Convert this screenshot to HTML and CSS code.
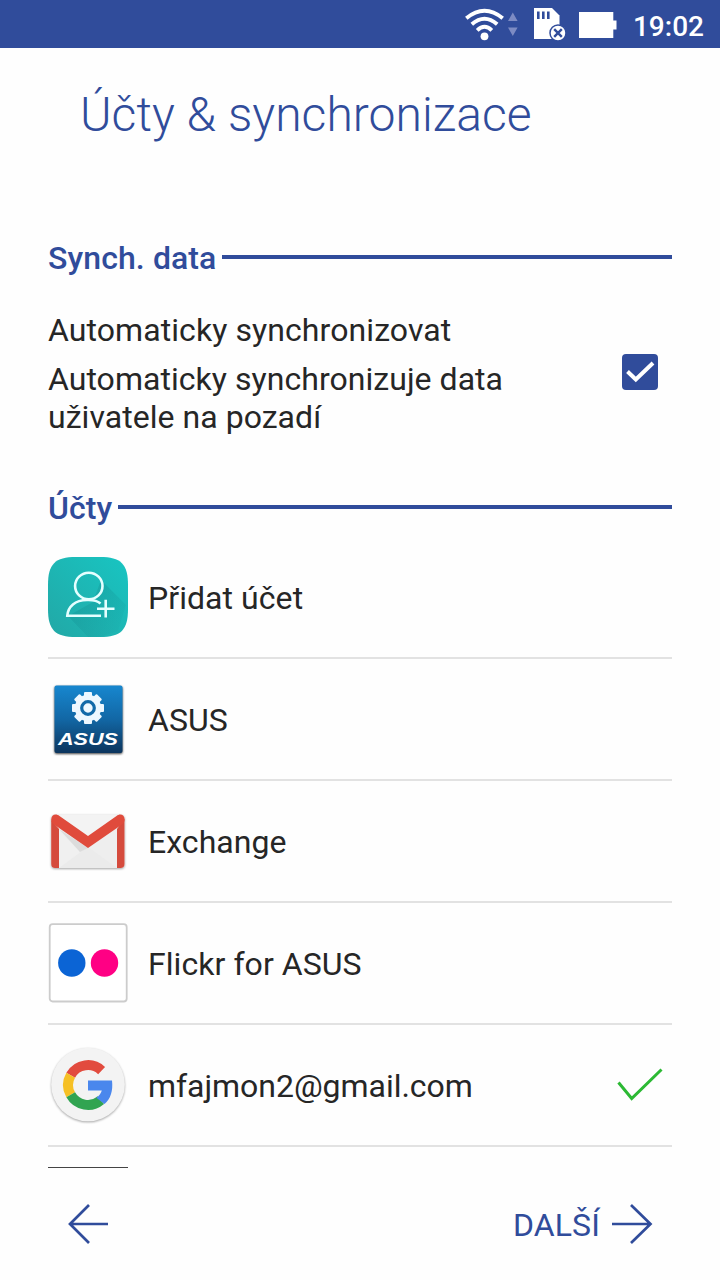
FILE: index.html
```html
<!DOCTYPE html>
<html lang="cs">
<head>
<meta charset="utf-8">
<title>Účty &amp; synchronizace</title>
<link rel="stylesheet" href="styles.css">
</head>
<body>
<div class="screen">
  <header class="status">
    <svg class="status-icons" width="160" height="48" viewBox="460 0 160 48">
      <g fill="none" stroke="#fff" stroke-width="3.900">
        <path d="M466.300 18.200Q484.500 3.200 502.700 18.200"/>
        <path d="M471.800 24.300Q484.500 13.200 497.200 24.300"/>
        <path d="M477.200 30.300Q484.500 23.300 491.800 30.300"/>
      </g>
      <circle cx="484.500" cy="36.300" r="3.900" fill="#fff"/>
      <path d="M508 21L512.800 12.500L517.600 21ZM508 27.500L512.800 36L517.600 27.500Z" fill="#7d8bc3"/>
      <path d="M534 8H552L559.500 15.500V39H534Z" fill="#fff"/>
      <path d="M538.300 11.500V19M543.300 11.500V19M548.300 11.500V19" stroke="#304c9b" stroke-width="2.600"/>
      <circle cx="558" cy="33" r="8" fill="#fff" stroke="#304c9b" stroke-width="1.500"/>
      <path d="M554.200 29.200L561.800 36.800M561.800 29.200L554.200 36.800" stroke="#304c9b" stroke-width="2.400"/>
      <path d="M579 12H613.300V20.500H616.500V29.500H613.300V38H579Z" fill="#fff"/>
    </svg>
    <span class="clock">19:02</span>
  </header>
  <h1 class="title">Účty &amp; synchronizace</h1>
  <main class="content">
    <h2 class="section"><span class="section-label">Synch. data</span></h2>
    <div class="sync">
      <div>
        <div class="sync-title">Automaticky synchronizovat</div>
        <div class="sync-note">Automaticky synchronizuje data uživatele na pozadí</div>
      </div>
      <svg class="checkbox" width="36" height="36" viewBox="0 0 36 36">
        <rect width="36" height="36" rx="4" fill="#304c9b"/>
        <path d="M5.500 17.500L13.800 25.500L31 9" fill="none" stroke="#fff" stroke-width="4"/>
      </svg>
    </div>
    <h2 class="section"><span class="section-label">Účty</span></h2>
    <ul class="accounts">
      <li class="account">
        <svg class="icon" viewBox="0 0 80 80">
          <defs>
            <linearGradient id="teal" x1="0" y1="1" x2="1" y2="0"><stop offset="0" stop-color="#22a8a6"/><stop offset="1" stop-color="#18c5c2"/></linearGradient>
            <linearGradient id="shade" x1="0" y1="0" x2="1" y2="1"><stop offset="0" stop-color="#138e91" stop-opacity=".5"/><stop offset="1" stop-color="#138e91" stop-opacity="0"/></linearGradient>
            <clipPath id="tile"><path d="M28 0H52C73 0 80 7 80 28V52C80 73 73 80 52 80H28C7 80 0 73 0 52V28C0 7 7 0 28 0Z"/></clipPath>
          </defs>
          <g clip-path="url(#tile)">
            <rect width="80" height="80" fill="url(#teal)"/>
            <path d="M53 23L78 48L70 74L43 83L20 59L45 45Z" fill="url(#shade)"/>
          </g>
          <g fill="none" stroke="#e4ffff" stroke-width="2.600">
            <ellipse cx="40.800" cy="29" rx="13.700" ry="13.300"/>
            <path d="M52.500 46.500C48 42.500 43 43 39 43C27 43 20 49.500 19.300 58.700H53M49 51.700H66.500M57.700 42.800V60.500"/>
          </g>
        </svg>
        <span class="name">Přidat účet</span>
      </li>
      <li class="account">
        <svg class="icon" viewBox="0 0 80 80">
          <defs><linearGradient id="asusBlue" x1="0" y1="0" x2="0" y2="1"><stop offset="0" stop-color="#1787cf"/><stop offset=".5" stop-color="#1267a5"/><stop offset="1" stop-color="#0c355d"/></linearGradient></defs>
          <rect class="deep-shadow" x="6.500" y="6.500" width="68" height="67.500" rx="2" fill="url(#asusBlue)"/>
          <g transform="translate(40 29)">
            <g fill="#eef8ff">
              <circle r="13.200"/>
              <g id="teeth"><rect x="-4" y="-16" width="8" height="32" rx="1"/><rect x="-16" y="-4" width="32" height="8" rx="1"/></g>
              <use href="#teeth" transform="rotate(45)"/>
            </g>
            <circle r="6.300" fill="none" stroke="#1269a8" stroke-width="3.200"/>
          </g>
          <text class="asus-mark" x="10" y="65.500" textLength="60" lengthAdjust="spacingAndGlyphs">ASUS</text>
        </svg>
        <span class="name">ASUS</span>
      </li>
      <li class="account">
        <svg class="icon" viewBox="0 0 80 80">
          <rect class="soft-shadow" x="3.200" y="13.500" width="73.500" height="53.500" rx="4" fill="#eee"/>
          <path d="M11 67L40 46L69 67Z" fill="#ebebeb"/>
          <path d="M11 67L32 51L11 30Z" fill="#f0f0f0"/>
          <path d="M11 28L40 47L32 51Z" fill="#dcdcdc"/>
          <path d="M4 20L11 28V67H7Q3.200 67 3.200 63V18ZM76.500 18V63Q76.500 67 72.500 67H69V28Z" fill="#d54b3d"/>
          <path d="M6 13.500H74L40 38Z" fill="#f3f3f3"/>
          <path d="M3.200 18.500C3.200 13.500 8 12 11.500 15L40 35L68.500 15C72 12 76.700 13.500 76.700 18.500Q76.700 21.500 74 23.500L40 47L6 23.500Q3.200 21.500 3.200 18.500Z" fill="#e04b3c"/>
        </svg>
        <span class="name">Exchange</span>
      </li>
      <li class="account">
        <svg class="icon" viewBox="0 0 80 80">
          <rect x="1.700" y="1.200" width="77" height="77.300" rx="3" fill="#fff" stroke="#ccc" stroke-width="1.800"/>
          <circle cx="23.800" cy="40" r="13.700" fill="#0b64d5"/>
          <circle cx="56.500" cy="40" r="13.700" fill="#ff0084"/>
        </svg>
        <span class="name">Flickr for ASUS</span>
      </li>
      <li class="account">
        <svg class="icon" viewBox="0 0 80 80">
          <circle class="soft-shadow" cx="40" cy="39.500" r="36.800" fill="#f3f3f3"/>
          <g fill="none" stroke-width="10">
            <path d="M22.700 30.200A19.800 19.800 0 0 1 53.600 25.600" stroke="#e24b3e"/>
            <path d="M22.700 49.800A19.800 19.800 0 0 1 22.700 30.200" stroke="#f6c025"/>
            <path d="M52.800 55.100A19.800 19.800 0 0 1 22.700 49.800" stroke="#31a451"/>
          </g>
          <path d="M40 35.500H64C65.200 46 62.500 54 56.500 59L48.300 52.700C51.200 50.800 53 48.500 53.800 45.500H40Z" fill="#4a87ed"/>
        </svg>
        <span class="name email">mfajmon2@gmail.com</span>
        <svg class="tick" width="48" height="36" viewBox="616 1067 48 36"><path d="M618.500 1082.500L631.700 1098.500L661.500 1069.500" fill="none" stroke="#2cb934" stroke-width="3"/></svg>
      </li>
      <li class="account"><div class="icon next-icon"></div></li>
    </ul>
  </main>
  <footer class="nav">
    <svg width="44" height="44" viewBox="66 1202 44 44"><path d="M108 1224H70M89 1205L70 1224L89 1243" fill="none" stroke="#304c9b" stroke-width="2.700"/></svg>
    <div class="next">
      <span class="next-label">DALŠÍ</span>
      <svg width="44" height="44" viewBox="610 1202 44 44"><path d="M612 1224H650.500M631 1205L650.500 1224L631 1243" fill="none" stroke="#304c9b" stroke-width="2.700"/></svg>
    </div>
  </footer>
</div>
</body>
</html>
```
FILE: styles.css
```css
* { box-sizing: border-box; }
body { margin: 0; font-family: Roboto, "Noto Sans", sans-serif; color: #262626; }
.screen { width: 720px; height: 1280px; display: flex; flex-direction: column; overflow: hidden; background: #fefefe; }
.status { height: 48px; flex: none; display: flex; justify-content: flex-end; align-items: center; gap: 13px; padding-right: 16px; background: #304c9b; color: #fff; }
.status-icons { display: block; }
.clock { font-size: 28px; font-weight: 500; line-height: 32px; padding-top: 6px; }
.title { flex: none; margin: 0; height: 190px; padding: 39px 0 0 80px; font-size: 48px; line-height: 56px; font-weight: 300; letter-spacing: .05px; color: #304c9b; }
.content { flex: 1; min-height: 0; padding: 0 48px; overflow: hidden; }
.section { display: flex; align-items: center; gap: 6px; margin: 0; height: 38px; font-size: 32px; line-height: 38px; font-weight: 500; color: #304c9b; }
.section-label { padding-top: 2px; letter-spacing: .1px; }
.section::after { content: ""; flex: 1; height: 4px; background: #304c9b; }
.sync { display: flex; justify-content: space-between; height: 212px; padding: 35px 14px 0 0; font-size: 32px; line-height: 38px; }
.sync-title { letter-spacing: .08px; }
.sync-note { width: 480px; margin-top: 11px; letter-spacing: .04px; }
.checkbox { flex: none; margin-top: 43px; }
.accounts { list-style: none; margin: 0; padding: 11px 0 0; }
.account { display: flex; align-items: center; height: 122px; border-bottom: 2px solid #e2e2e2; font-size: 32px; line-height: 38px; }
.icon { width: 80px; height: 80px; flex: none; margin-right: 20px; overflow: visible; }
.name { padding-top: 2px; letter-spacing: .06px; }
.email { letter-spacing: -.04px; }
.soft-shadow { filter: drop-shadow(0 1.5px 1px rgba(0, 0, 0, .35)); }
.deep-shadow { filter: drop-shadow(0 1.5px 1px rgba(0, 0, 0, .75)); }
.asus-mark { font: italic bold 17px "Liberation Sans", sans-serif; fill: #fff; }
.tick { margin: 0 8px 0 auto; }
.next-icon { background: #444; }
.nav { height: 112px; flex: none; display: flex; justify-content: space-between; align-items: center; padding: 0 66px; color: #304c9b; }
.next { display: flex; align-items: center; gap: 10px; font-size: 32px; line-height: 38px; }
.next-label { padding-top: 2px; letter-spacing: .1px; }
```
